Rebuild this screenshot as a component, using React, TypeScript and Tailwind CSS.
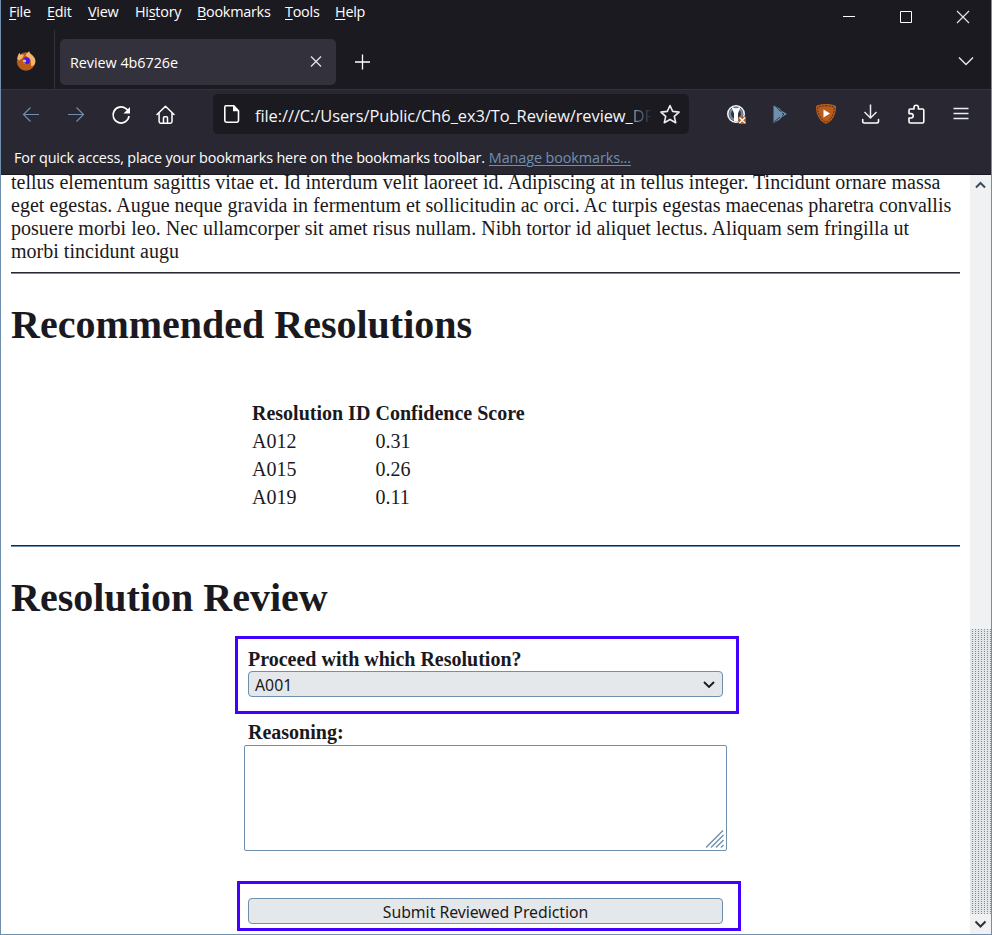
import type { ReactNode } from "react";

function Icon({ children, className = "" }: { children: ReactNode; className?: string }) {
  return (
    <svg viewBox="0 0 24 24" fill="none" className={"h-6 w-6 shrink-0 " + className}>
      {children}
    </svg>
  );
}

const menus: [string, string, string, string][] = [
  ["", "F", "ile", "w-[38px]"],
  ["", "E", "dit", "w-[41px]"],
  ["", "V", "iew", "w-[47px]"],
  ["Hi", "s", "tory", "w-[62px]"],
  ["", "B", "ookmarks", "w-[88px]"],
  ["", "T", "ools", "w-[50px]"],
  ["", "H", "elp", "w-[40px]"],
];

function MenuBar() {
  return (
    <div className="flex h-[30px] items-start pl-2">
      <div className="flex h-6 grow items-center text-[14.4px] tracking-[-0.25px]">
        {menus.map(([before, key, after, width]) => (
          <span key={key + after} className={"whitespace-nowrap " + width}>
            {before}
            <span className="underline underline-offset-2">{key}</span>
            {after}
          </span>
        ))}
      </div>
      <div className="flex gap-[33px] pt-[5px] pr-4">
        <Icon>
          <path d="M6 11.5h12" stroke="#fff" />
        </Icon>
        <Icon>
          <path d="M6.5 6.5h11v11h-11z" stroke="#fff" />
        </Icon>
        <Icon>
          <path d="m6 6 12 12M18 6 6 18" stroke="#e2e6e8" strokeWidth="1.2" />
        </Icon>
      </div>
    </div>
  );
}

function Firefox() {
  return (
    <Icon>
      <circle cx="12" cy="12.500" r="9.200" fill="#b85c1c" />
      <path d="M3.200 9.500C3.800 6.500 4.800 4.500 5.500 3.700l.8 2.200C8 4.900 9 5.500 10 6.500l-2 3-3 2z" fill="#f3b66b" />
      <path d="M11.500 6.500c.6-1.600 2-3 3.700-4.200.6 2.400 2 3.200 3.400 4.400 2.200 2 3 4 2.800 6.300-.4 2.600-1.800 3.800-4 4.500l-1-7z" fill="#f3b66b" />
      <circle cx="12.500" cy="11.700" r="3.400" fill="#4a14e8" />
      <path d="M8.800 11c2-1.400 4 .2 3.300 1.700-.8 1-2 .6-3 .3z" fill="#f3b66b" />
      <path d="M9 13.500h2.500v1.500h-2z" fill="#6f8fae" />
    </Icon>
  );
}

function TabStrip() {
  return (
    <div className="flex h-[59px] items-center">
      <div className="flex h-full w-[54px] items-center justify-center border-r border-[#32313c] pt-0.5 pr-1">
        <Firefox />
      </div>
      <div className="mt-[5px] ml-[5px] flex h-[46px] w-[276px] items-center justify-between rounded-[5px] bg-[#32313c] pr-2 pl-[10px]">
        <span className="pt-0.5 text-[14.4px] tracking-[-0.05px]">Review 4b6726e</span>
        <Icon>
          <path d="m7 6.500 10 10M17 6.500l-10 10" stroke="#e2e6e8" strokeWidth="1.3" />
        </Icon>
      </div>
      <Icon className="mt-[5px] ml-[14px]">
        <path d="M12.500 4.500v15M5 12h15" stroke="#fff" strokeWidth="1.3" />
      </Icon>
      <Icon className="mt-0.5 mr-[13px] ml-auto">
        <path d="m5 8.500 7 7 7-7" stroke="#e2e6e8" strokeWidth="1.5" />
      </Icon>
    </div>
  );
}

function NavBar() {
  return (
    <div className="flex h-12 items-center">
      <div className="flex w-[212px] gap-[21px] pl-[18px]">
        <Icon>
          <path d="M20 12.500H4.500m7-7-7 7 7 7" stroke="#6f8fae" strokeWidth="1.2" />
        </Icon>
        <Icon>
          <path d="M4 12.500h15.500m-7-7 7 7-7 7" stroke="#6f8fae" strokeWidth="1.2" />
        </Icon>
        <Icon>
          <path d="M20 14a8 8 0 1 1-3-7.300l2 1.800" stroke="#fff" strokeWidth="1.7" />
          <path d="M21 5v6.500h-6.500z" fill="#fff" />
        </Icon>
        <Icon>
          <path
            d="m3 12.500 8.500-8.300 8.500 8.300M5.100 11v8.600c0 1 .6 1.600 1.500 1.600h9.800c1 0 1.600-.6 1.600-1.600V11M9.500 21v-5.200c0-.6.4-1 1-1h2c.6 0 1 .4 1 1V21"
            stroke="#fff"
            strokeWidth="1.5"
            strokeLinecap="round"
            strokeLinejoin="round"
          />
        </Icon>
      </div>
      <div className="flex h-10 w-[476px] items-center rounded-[5px] bg-[#1c1a21] pr-[7px] pl-[7px]">
        <Icon>
          <path
            d="M5.800 3.800h8l4.700 5v9.800c0 .9-.7 1.600-1.600 1.600H6.400c-.9 0-1.600-.7-1.600-1.600V5.400c0-.9.5-1.600 1-1.600Z"
            stroke="#fff"
            strokeWidth="1.6"
          />
          <path d="M13 3.500v5.700h6z" fill="#fff" />
        </Icon>
        <div className="mt-1 ml-[11px] h-6 w-[396px] overflow-hidden text-[16.4px] leading-6 tracking-[-0.06px] whitespace-nowrap text-[#f4f6f7]">
          file:///C:/Users/Public/Ch6_ex3/To_Review/review_
          <span className="bg-gradient-to-r from-[#86a3be] to-[#1c1a21] to-[20px] bg-clip-text text-transparent">DF</span>
        </div>
        <Icon className="ml-[7px]">
          <path
            d="m12 3.500 2.700 5.900 6.400.7-4.800 4.300 1.400 6.300-5.700-3.200-5.700 3.200 1.400-6.300-4.800-4.300 6.400-.7z"
            stroke="#e8edf0"
            strokeWidth="1.6"
            strokeLinejoin="round"
          />
        </Icon>
      </div>
      <div className="flex gap-[21px] pl-[35px]">
        <Icon>
          <circle cx="12" cy="12" r="8.200" fill="#32313c" stroke="#f4f6f7" strokeWidth="1.6" />
          <circle cx="12" cy="12" r="6" stroke="#6f8fae" strokeWidth="2" />
          <path d="M7.500 5 10 11.500V19c1.300.8 2.700.8 4 0v-7.500L16.500 5 12 6.500z" fill="#fff" />
          <path d="M14.500 14.500h7.500v7.500h-7.500z" fill="#b85c1c" />
          <path d="m15.500 15.500 5.500 5.500m0-5.500-5.500 5.500" stroke="#fff" strokeWidth="1.3" />
        </Icon>
        <Icon>
          <path d="M4.500 3.500 10 6l3 3 5 3-5 3-3 3-5.500 3z" fill="#6f8fae" />
          <path d="m7 4.500 4 4.500h2m-8 11 6-5m2-4 2 1-2 2" stroke="#32313c" />
        </Icon>
        <Icon>
          <path
            d="M12 2c3 0 5.500.4 8.500 1.300 1 .4 1.500 1 1.500 2 0 5.700-2.500 12.700-8.500 16-1 .5-2 .5-3 0C4.500 18 2 11 2 5.300c0-1 .5-1.600 1.500-2C6.500 2.400 9 2 12 2Z"
            fill="#b85c1c"
          />
          <path
            d="M12 3.800c2.500 0 5 .3 7.500 1.100.5.200.8.500.8 1.100 0 5-2.300 11-7.300 13.700-.7.400-1.300.4-2 0C6 17 3.700 11 3.700 6c0-.6.3-.9.8-1.100C7 4.100 9.500 3.800 12 3.800Z"
            stroke="#57301f"
            strokeDasharray="2 1"
          />
          <path d="m9.500 7.500 6.500 4-6.500 4z" fill="#fff" />
        </Icon>
        <Icon>
          <path d="M11.500 2.500V16m-6-6 6 6 6-6" stroke="#e8edf0" strokeWidth="1.5" />
          <path
            d="M3.700 17.500v2c0 .9.600 1.500 1.500 1.500h12.800c.9 0 1.500-.6 1.500-1.500v-2"
            stroke="#fff"
            strokeWidth="1.6"
            strokeLinecap="round"
          />
        </Icon>
        <Icon>
          <path
            d="M5 8.300C5 7.500 5.600 7 6.300 7H10V5.500a2.200 2.200 0 0 1 4.400 0V7h4c.9 0 1.400.5 1.400 1.300v11.300c0 .8-.5 1.400-1.400 1.400H6.300C5.600 21 5 20.400 5 19.600V16h2a2.200 2.200 0 0 0 0-4.400H5z"
            stroke="#fff"
            strokeWidth="1.6"
            strokeLinejoin="round"
          />
        </Icon>
        <Icon>
          <path d="M4.500 6.500h15M4.500 11.500h15M4.500 16.500h15" stroke="#e8edf0" strokeWidth="1.4" />
        </Icon>
      </div>
    </div>
  );
}

function Rule() {
  return <div className="h-0.5 border-t border-b border-t-[#272631] border-b-[#6f8fae]" />;
}

const resolutions = [
  ["A012", "0.31"],
  ["A015", "0.26"],
  ["A019", "0.11"],
];

function Page() {
  return (
    <div className="h-[759px] w-[969px] overflow-hidden bg-white px-2.5 font-['Liberation_Serif',serif] text-xl leading-[23px] text-[#1b1920]">
      <p className="-mt-1 tracking-[0.015px] whitespace-nowrap">
        tellus elementum sagittis vitae et. Id interdum velit laoreet id. Adipiscing at in tellus integer. Tincidunt ornare massa
        <br />
        eget egestas. Augue neque gravida in fermentum et sollicitudin ac orci. Ac turpis egestas maecenas pharetra convallis
        <br />
        posuere morbi leo. Nec ullamcorper sit amet risus nullam. Nibh tortor id aliquet lectus. Aliquam sem fringilla ut
        <br />
        morbi tincidunt augu
      </p>
      <div className="mt-[9px]">
        <Rule />
      </div>
      <h1 className="mt-7 text-[40px] leading-[46px] font-bold">Recommended Resolutions</h1>
      <table className="mt-[51px] ml-[241px] border-collapse leading-7">
        <thead>
          <tr>
            <th className="w-[123.500px] p-0 text-left whitespace-nowrap">Resolution ID</th>
            <th className="p-0 text-left">Confidence Score</th>
          </tr>
        </thead>
        <tbody>
          {resolutions.map(([id, score]) => (
            <tr key={id}>
              <td className="p-0">{id}</td>
              <td className="p-0">{score}</td>
            </tr>
          ))}
        </tbody>
      </table>
      <div className="mt-[34px]">
        <Rule />
      </div>
      <h1 className="mt-7 text-[40px] leading-[46px] font-bold">Resolution Review</h1>
      <div className="mt-[15px] ml-[224px] h-[78px] w-[504px] border-[3px] border-[#4400ff] pt-[9px] pl-2.5">
        <div className="h-[23px] font-bold">Proceed with which Resolution?</div>
        <div className="flex h-[26px] w-[475px] items-center justify-between rounded-[4px] border border-[#6f8fae] bg-[#e5e8ea] pr-px pl-1.5 font-['Noto_Sans',sans-serif] text-[15.8px] leading-6">
          <span className="pt-0.5">A001</span>
          <Icon>
            <path d="m7 10 5 5 5-5" stroke="#1b1920" strokeWidth="1.900" />
          </Icon>
        </div>
      </div>
      <div className="mt-[7px] ml-[237px] font-bold">Reasoning:</div>
      <div className="mt-px ml-[233px] flex h-[106px] w-[483px] items-end justify-end rounded-[2px] border border-[#6f8fae]">
        <svg viewBox="0 0 20 20" className="h-5 w-5" fill="none">
          <path d="M0 17.500 17 .5M5 17.500 17.500 5M10 17.500 17.500 10M15 17.500l2.500-2.500" stroke="#6f8fae" strokeWidth="1.400" />
        </svg>
      </div>
      <div className="mt-[30px] ml-[226px] h-[50px] w-[504px] border-[3px] border-[#4400ff] pt-[14px] pl-2">
        <button className="block h-[26px] w-[475px] rounded-[4px] border border-[#6f8fae] bg-[#e5e8ea] pt-px font-['Noto_Sans',sans-serif] text-[15.8px] leading-6 tracking-[-0.03px]">
          Submit Reviewed Prediction
        </button>
      </div>
    </div>
  );
}

function Scrollbar() {
  return (
    <div className="flex w-[21px] flex-col items-center bg-[#eff1f2]">
      <svg viewBox="0 0 21 20" className="h-5 w-[21px]" fill="none">
        <path d="m6 12.500 4.500-4.500 4.500 4.500" stroke="#3d4a5c" strokeWidth="2" />
      </svg>
      <div className="mt-[434px] h-[285px] w-full bg-[#e2e6e8] bg-[conic-gradient(from_90deg_at_2px_1px,#e2e6e8_75%,#6f8fae_0)] bg-size-[3px_2px]" />
      <svg viewBox="0 0 21 20" className="h-5 w-[21px]" fill="none">
        <path d="m5.500 7.500 5 5 5-5" stroke="#32313c" strokeWidth="2" />
      </svg>
    </div>
  );
}

export default function App() {
  return (
    <div className="flex h-[935px] w-[992px] flex-col overflow-hidden border-x border-b border-[#6f8fae] font-['Open_Sans',sans-serif] text-white">
      <div className="h-[89px] bg-[#1c1a21]">
        <MenuBar />
        <TabStrip />
      </div>
      <div className="h-[86px] border-t border-b border-t-[#32313c] border-b-[#1b1920] bg-[#292832]">
        <NavBar />
        <div className="mt-1 flex h-8 items-center pl-[13px] text-[14.4px] whitespace-nowrap">
          <span className="tracking-[-0.16px]">For quick access, place your bookmarks here on the bookmarks toolbar.</span>
          <a className="ml-1 tracking-[-0.1px] text-[#6f8fae] underline underline-offset-2">Manage bookmarks...</a>
        </div>
      </div>
      <div className="flex h-[759px]">
        <Page />
        <Scrollbar />
      </div>
    </div>
  );
}
